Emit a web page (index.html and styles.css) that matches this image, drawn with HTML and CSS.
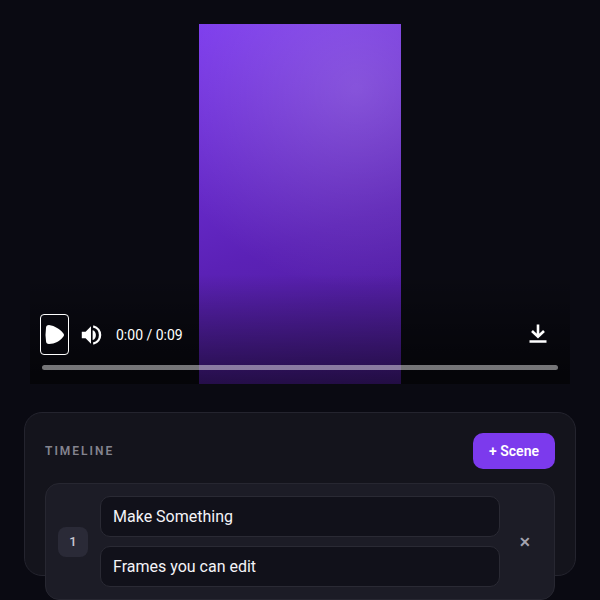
FILE: index.html
```html
<!DOCTYPE html>
<html lang="en">
<head>
    <meta charset="UTF-8">
    <meta name="viewport" content="width=device-width, initial-scale=1.0">
    <title>Video Editor</title>
    <link rel="stylesheet" href="styles.css">
</head>
<body>

    <main class="app">
        <section class="player" aria-label="Preview">
            <div class="frame"></div>
            <div class="controls">
                <div class="control-row">
                    <button class="play-btn" aria-label="Play">
                        <svg width="20" height="20" viewBox="0 0 20 20">
                            <path d="M1 3Q1 0 4 0C10 1 15 4 18 8Q20 10 18 12C15 16 10 19 4 19Q1 19 1 16Q0 10 1 3Z" fill="currentColor"/>
                        </svg>
                    </button>
                    <button class="icon-btn" aria-label="Mute">
                        <svg width="26" height="26" viewBox="0 0 24 24">
                            <path d="M3.500 9v6h3.500l5 5V4L7 9H3.500z" fill="currentColor"/>
                            <path d="M13.500 7.500C17.500 8 17.500 16 13.500 16.500z" fill="currentColor"/>
                            <path d="M14 4C22.500 6 22.500 18 14 20" fill="none" stroke="currentColor" stroke-width="2.200"/>
                        </svg>
                    </button>
                    <span class="time">0:00 / 0:09</span>
                    <button class="icon-btn download-btn" aria-label="Download">
                        <svg width="24" height="24" viewBox="0 0 24 24" fill="none" stroke="currentColor" stroke-width="2.600">
                            <path d="M12 1.500V13.500M6 8L12 13.800L18 8M3.500 18.500H20.500"/>
                        </svg>
                    </button>
                </div>
                <input class="seek" type="range" min="0" max="9" value="0" aria-label="Seek">
            </div>
        </section>

        <section class="panel">
            <div class="panel-header">
                <h2>TIMELINE</h2>
                <button class="add-btn">+ Scene</button>
            </div>

            <div class="scene">
                <span class="scene-number">1</span>
                <div class="scene-fields">
                    <input type="text" value="Make Something" aria-label="Scene title">
                    <input type="text" value="Frames you can edit" aria-label="Scene subtitle">
                </div>
                <button class="remove-btn" aria-label="Remove scene">✕</button>
            </div>
        </section>
    </main>

</body>
</html>
```

FILE: styles.css
```css
/* Global Styles */
* {
    box-sizing: border-box;
}

body {
    margin: 0;
    background: #0a0a12;
    color: #f4f4f8;
    font-family: Roboto, sans-serif;
    overflow: hidden;
}

button {
    border: none;
    padding: 0;
    background: none;
    color: inherit;
    font-family: inherit;
    cursor: pointer;
}

.app {
    display: flex;
    flex-direction: column;
    gap: 28px;
    height: 100vh;
    padding: 24px;
}

/* Video Player */
.player {
    position: relative;
    flex: none;
    height: 60vh;
    margin: 0 6px;
}

.frame {
    height: 100%;
    aspect-ratio: 101 / 180;
    margin: 0 auto;
    background:
        radial-gradient(circle at 78% 18%, rgba(255, 255, 255, 0.18), transparent 200px),
        linear-gradient(160deg, #7c3aed 0%, #5b21b6 58%, #4c1d95 100%);
}

/* Player Controls */
.controls {
    position: absolute;
    inset: auto 0 0;
    padding: 40px 12px 14px;
    color: #fff;
    background: linear-gradient(transparent, rgba(0, 0, 0, 0.55));
}

.control-row {
    display: flex;
    align-items: center;
}

.play-btn {
    display: flex;
    align-items: center;
    justify-content: center;
    width: 29px;
    height: 41px;
    margin: 0 9px 0 -2px;
    border: 1px solid #fff;
    border-radius: 4px;
}

.icon-btn {
    display: flex;
}

.time {
    margin-left: 12px;
    font-size: 14px;
}

.download-btn {
    margin: 0 8px 0 auto;
}

.seek {
    display: block;
    appearance: none;
    width: 100%;
    height: 5px;
    margin: 10px 0 0;
    border-radius: 3px;
    background: rgba(255, 255, 255, 0.45);
}

.seek::-webkit-slider-thumb {
    appearance: none;
    width: 0;
    height: 0;
}

/* Timeline Panel */
.panel {
    flex: 1;
    min-height: 0;
    padding: 20px;
    border: 1px solid #24242e;
    border-radius: 18px;
    background: #14141c;
}

.panel-header {
    display: flex;
    justify-content: space-between;
    align-items: center;
    margin-bottom: 14px;
}

.panel-header h2 {
    margin: 0;
    color: #84848f;
    font-size: 12px;
    font-weight: 600;
    letter-spacing: 2px;
}

.add-btn {
    height: 36px;
    padding: 0 16px;
    border-radius: 10px;
    background: #7c3aed;
    color: #fff;
    font-size: 14px;
    font-weight: 600;
}

/* Scene Card */
.scene {
    display: grid;
    grid-template-columns: 30px 1fr 30px;
    align-items: center;
    gap: 12px;
    padding: 12px;
    border: 1px solid #272731;
    border-radius: 14px;
    background: #1c1c26;
}

.scene-number {
    height: 30px;
    border-radius: 8px;
    background: #2a2a37;
    color: #c8c8d2;
    font-size: 13px;
    font-weight: 500;
    line-height: 30px;
    text-align: center;
}

.scene-fields {
    display: grid;
    gap: 9px;
}

.scene-fields input {
    width: 100%;
    height: 41px;
    padding: 0 12px;
    border: 1px solid #2a2a34;
    border-radius: 10px;
    background: #11111a;
    color: #f4f4f8;
    font-family: inherit;
    font-size: 16px;
}

.remove-btn {
    width: 26px;
    height: 30px;
    color: #a4a4b0;
    font-size: 14px;
    font-weight: 700;
}
```
